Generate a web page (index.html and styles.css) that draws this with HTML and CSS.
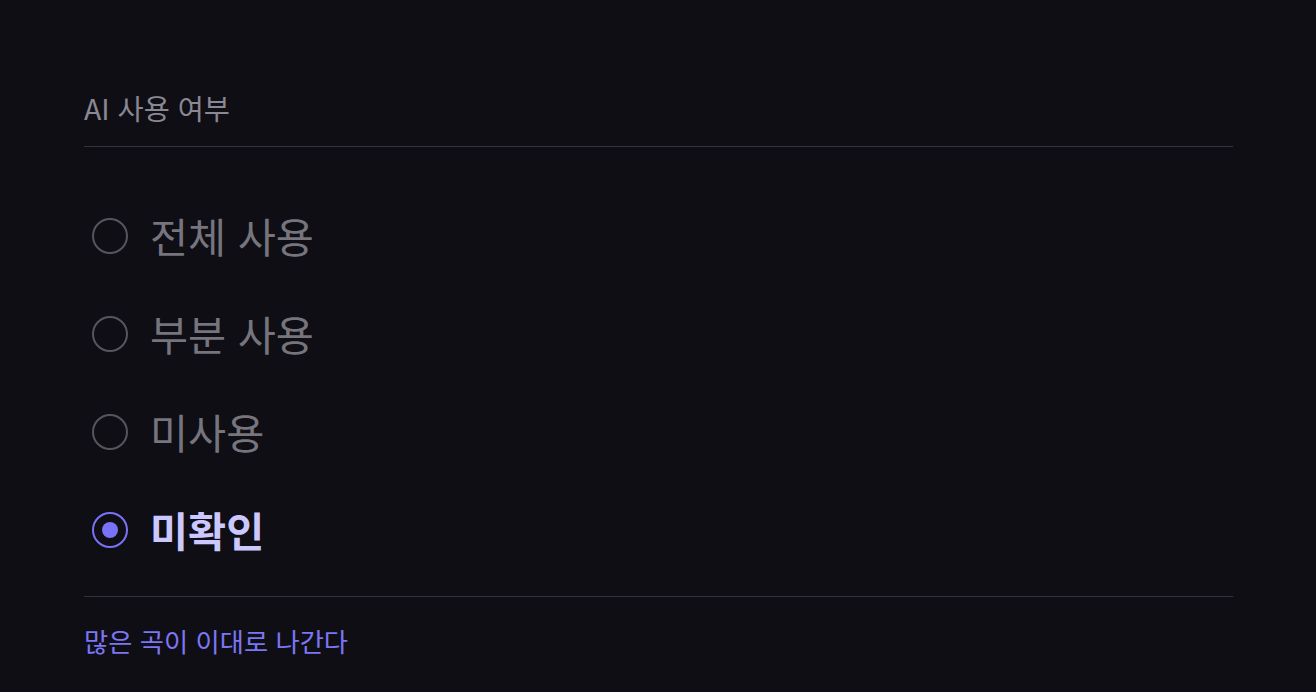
FILE: index.html
```html
<!DOCTYPE html>
<html lang="ko">
<head>
<meta charset="utf-8">
<link rel="stylesheet" href="styles.css">
</head>
<body>
<section class="panel">
  <h2 class="panel-title">AI 사용 여부</h2>
  <ul class="options">
    <li class="option"><span class="radio"></span><span class="label">전체 사용</span></li>
    <li class="option"><span class="radio"></span><span class="label">부분 사용</span></li>
    <li class="option"><span class="radio"></span><span class="label">미사용</span></li>
    <li class="option selected"><span class="radio"></span><span class="label">미확인</span></li>
  </ul>
  <p class="note">많은 곡이 이대로 나간다</p>
</section>
</body>
</html>
```

FILE: styles.css
```css
html, body {
  margin: 0;
  background: #0f0e15;
  font-family: "Noto Sans CJK KR", "Noto Sans", sans-serif;
}
.panel {
  padding: 88px 83px 0 84px;
}
.panel-title {
  margin: 0;
  font-size: 28.4px;
  font-weight: 400;
  line-height: 39px;
  color: #8a8893;
  padding-bottom: 19px;
  border-bottom: 1px solid #34333c;
}
.options {
  list-style: none;
  margin: 0;
  padding: 40px 0 17px;
  border-bottom: 1px solid #34333c;
}
.option {
  display: flex;
  align-items: center;
  height: 98px;
  padding-left: 8px;
  gap: 22px;
}
.radio {
  box-sizing: border-box;
  width: 36px;
  height: 36px;
  border-radius: 50%;
  border: 2px solid #56555d;
  display: flex;
  align-items: center;
  justify-content: center;
}
.label {
  font-size: 41.4px;
  line-height: 1;
  color: #76757e;
}
.selected .radio {
  border-color: #7a72f6;
}
.selected .radio::after {
  content: "";
  width: 16px;
  height: 16px;
  border-radius: 50%;
  background: #7a72f6;
}
.selected .label {
  color: #cbc8ff;
  font-weight: 700;
}
.note {
  margin: 0;
  padding-top: 24px;
  font-size: 26.3px;
  line-height: 39px;
  color: #7c76f4;
}
```
